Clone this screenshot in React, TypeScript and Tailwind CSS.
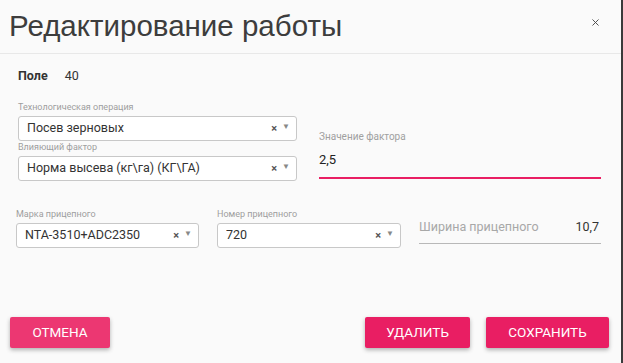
import { X } from 'lucide-react';

const font = { fontFamily: 'Roboto, "Open Sans", "Liberation Sans", sans-serif' };

interface SelectProps {
  label: string;
  value: string;
  className?: string;
}

function SelectField({ label, value, className = '' }: SelectProps) {
  return (
    <div className={`flex flex-col ${className}`}>
      <span className="h-[13px] text-[9px] leading-[13px] text-[#9e9e9e]">{label}</span>
      <div className="mt-[2px] flex h-[25px] items-center rounded-[3px] border border-[#c8c8c8] bg-white pl-[8px] pr-[6px]">
        <span className="flex-1 truncate text-[12.5px] text-[#333]">{value}</span>
        <span className="mr-[5px] text-[11px] font-bold leading-none text-[#555]">×</span>
        <span className="mt-[-2px] text-[8px] leading-none text-[#888]">▼</span>
      </div>
    </div>
  );
}

export default function App() {
  return (
    <div className="flex h-[363px] w-[623px] bg-[#3a3a3a]" style={font}>
      <div className="flex h-full w-[621px] flex-col bg-[#fafafa]">
        {/* Header */}
        <div className="flex h-[54px] items-center justify-between border-b border-[#e8e8e8] pl-[9px] pr-[20px]">
          <h1
            className="mt-[-2px] text-[29.5px] font-normal leading-none text-[#3d3d3d]"
            style={{ fontFamily: '"Liberation Sans", Arial, sans-serif' }}
          >
            Редактирование работы
          </h1>
          <X size={11} strokeWidth={2} className="mt-[-8px] text-[#444]" />
        </div>

        {/* Body */}
        <div className="flex flex-1 flex-col pl-[18px] pr-[20px]">
          <div className="mt-[13px] flex items-center text-[12.5px] text-[#333]">
            <span className="font-bold">Поле</span>
            <span className="ml-[17px]">40</span>
          </div>

          <div className="mt-[15px] flex">
            <div className="flex w-[279px] flex-col">
              <SelectField label="Технологическая операция" value="Посев зерновых" />
              <SelectField label="Влияющий фактор" value="Норма высева (кг\га) (КГ\ГА)" />
            </div>
            <div className="ml-[22px] flex flex-1 flex-col pt-[28px]">
              <span className="text-[10px] leading-[15px] text-[#a0a0a0]">Значение фактора</span>
              <span className="mt-[7px] text-[13px] leading-[17px] text-[#222]">2,5</span>
              <div className="mt-[9px] h-[2px] bg-[#e91e63]" />
            </div>
          </div>

          <div className="mt-[27px] flex items-start">
            <SelectField className="ml-[-2px] w-[183px]" label="Марка прицепного" value="NTA-3510+ADC2350" />
            <SelectField className="ml-[18px] w-[184px]" label="Номер прицепного" value="720" />
            <div className="ml-[18px] flex flex-1 flex-col pt-[10px]">
              <div className="flex items-center justify-between text-[12.5px] leading-[18px]">
                <span className="text-[#a8a8a8]">Ширина прицепного</span>
                <span className="mr-[2px] text-[#333]">10,7</span>
              </div>
              <div className="mt-[7px] h-px bg-[#b8b8b8]" />
            </div>
          </div>

          <div className="mt-auto mb-[15px] ml-[-8px] mr-[-8px] flex items-center">
            <button className="h-[31px] w-[100px] rounded-[2px] bg-[#ec3772] text-[13.5px] text-white shadow-[0_2px_4px_rgba(0,0,0,0.3)]">
              ОТМЕНА
            </button>
            <div className="flex-1" />
            <button className="h-[31px] w-[105px] rounded-[2px] bg-[#e91e63] text-[13.5px] text-white shadow-[0_2px_4px_rgba(0,0,0,0.3)]">
              УДАЛИТЬ
            </button>
            <button className="ml-[16px] h-[31px] w-[123px] rounded-[2px] bg-[#e91e63] text-[13.5px] text-white shadow-[0_2px_4px_rgba(0,0,0,0.3)]">
              СОХРАНИТЬ
            </button>
          </div>
        </div>
      </div>
    </div>
  );
}
